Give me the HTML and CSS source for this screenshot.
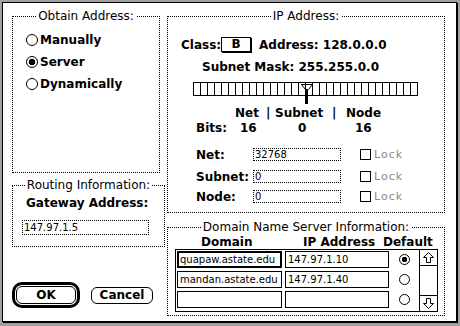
FILE: index.html
```html
<!DOCTYPE html>
<html>
<head>
<meta charset="utf-8">
<link rel="stylesheet" href="styles.css">
</head>
<body>
<div class="window">
  <div class="col col-left">
    <div class="group obtain">
      <div class="legend">Obtain Address:</div>
      <div class="radios">
        <div class="radio"><span class="rb"></span>Manually</div>
        <div class="radio"><span class="rb on"></span>Server</div>
        <div class="radio"><span class="rb"></span>Dynamically</div>
      </div>
    </div>
    <div class="group routing">
      <div class="legend">Routing Information:</div>
      <div class="gw-label">Gateway Address:</div>
      <div class="field gw">147.97.1.5</div>
    </div>
    <div class="buttons">
      <div class="ring"><div class="btn ok">OK</div></div>
      <div class="btn cancel">Cancel</div>
    </div>
  </div>
  <div class="col col-right">
    <div class="group ip">
      <div class="legend">IP Address:</div>
      <div class="class-row">
        <span class="class-label">Class:</span>
        <span class="class-box">B</span>
        <span class="addr">Address: 128.0.0.0</span>
      </div>
      <div class="mask">Subnet Mask: 255.255.0.0</div>
      <div class="slider-wrap">
        <div class="slider"></div>
        <svg class="thumb" width="12" height="20" viewBox="0 0 12 20" shape-rendering="crispEdges">
          <path d="M0.5 0.5H11.5M0.5 0.5L4.5 5.5M11.5 0.5L7.5 5.5" stroke="#000" stroke-width="1" fill="none" shape-rendering="auto"/>
          <rect x="0" y="0" width="12" height="1" fill="#000"/>
          <rect x="4" y="5" width="3" height="15" fill="#000"/>
        </svg>
      </div>
      <div class="nsn">
        <span>Net</span><span>|</span><span>Subnet</span><span>|</span><span>Node</span>
      </div>
      <div class="bits">
        <span>Bits:</span><span>16</span><span>0</span><span>16</span>
      </div>
      <div class="frow r1">
        <span class="flabel">Net:</span>
        <span class="field nf">32768</span>
        <span class="cb"></span><span class="lock">Lock</span>
      </div>
      <div class="frow r2">
        <span class="flabel">Subnet:</span>
        <span class="field nf">0</span>
        <span class="cb"></span><span class="lock">Lock</span>
      </div>
      <div class="frow r3">
        <span class="flabel">Node:</span>
        <span class="field nf">0</span>
        <span class="cb"></span><span class="lock">Lock</span>
      </div>
    </div>
    <div class="group dns">
      <div class="legend">Domain Name Server Information:</div>
      <div class="dns-head">
        <span>Domain</span><span>IP Address</span><span>Default</span>
      </div>
      <div class="table">
        <div class="rows">
          <div class="trow">
            <span class="cell dom focus">quapaw.astate.edu</span>
            <span class="cell ipc">147.97.1.10</span>
            <span class="trb on"></span>
          </div>
          <div class="trow">
            <span class="cell dom">mandan.astate.edu</span>
            <span class="cell ipc">147.97.1.40</span>
            <span class="trb"></span>
          </div>
          <div class="trow">
            <span class="cell dom"></span>
            <span class="cell ipc"></span>
            <span class="trb"></span>
          </div>
        </div>
        <div class="scroll">
          <div class="arrow up">
            <svg width="13" height="13" viewBox="0 0 13 13"><path d="M6.5 1.5L11.5 6.5H8.5V11.5H4.5V6.5H1.5Z" fill="#fff" stroke="#000" stroke-width="1" stroke-linejoin="miter"/></svg>
          </div>
          <div class="track"></div>
          <div class="arrow down">
            <svg width="13" height="13" viewBox="0 0 13 13"><path d="M6.5 11.5L11.5 6.5H8.5V1.5H4.5V6.5H1.5Z" fill="#fff" stroke="#000" stroke-width="1" stroke-linejoin="miter"/></svg>
          </div>
        </div>
      </div>
    </div>
  </div>
</div>
</body>
</html>
```
FILE: styles.css
```css
html, body {
  margin: 0;
  padding: 0;
}
body {
  background: #a0a0a0;
  padding: 2px;
  width: 460px;
  height: 326px;
  box-sizing: border-box;
  font-family: "DejaVu Sans", sans-serif;
  font-weight: bold;
  font-size: 12px;
  color: #000;
}
.window {
  width: 455px;
  height: 320px;
  box-sizing: border-box;
  border: 1px solid #000;
  box-shadow: 1px 1px 0 #000;
  background: #fff;
  display: flex;
  gap: 2px;
  padding: 13px 0 0 9px;
}
.col {
  display: flex;
  flex-direction: column;
}
.col-left { width: 153px; }
.col-right { width: 278px; }

.group {
  border: 1px dotted #000;
  box-sizing: border-box;
}
.legend {
  display: table;
  margin: -8px auto 0;
  padding: 0 2px;
  background: #fff;
  line-height: 14px;
  font-weight: normal;
  font-size: 12px;
}

/* Obtain */
.obtain { width: 148px; height: 157px; }
.radios {
  margin-top: 6px;
  padding-left: 13px;
}
.radio {
  display: flex;
  align-items: center;
  height: 22px;
}
.rb {
  width: 12px;
  height: 12px;
  border: 1px solid #000;
  border-radius: 50%;
  box-sizing: border-box;
  margin-right: 2px;
  background: #fff;
}
.rb.on, .trb.on {
  background: radial-gradient(circle, #000 0 3px, #fff 3.6px);
}

/* Routing */
.routing {
  width: 153px;
  height: 62px;
  margin-top: 12px;
}
.routing .legend { padding: 0 1px; }
.gw-label {
  margin-top: 3px;
  padding-left: 13px;
  line-height: 16px;
}
.field {
  display: block;
  box-sizing: border-box;
  border: 1px dotted #000;
  font-weight: normal;
  font-size: 10px;
  padding-left: 1px;
}
.gw {
  margin: 9px 0 0 9px;
  width: 127px;
  height: 15px;
  line-height: 13px;
}

/* Buttons */
.buttons {
  margin-top: 35px;
  display: flex;
  align-items: center;
}
.ring {
  width: 68px;
  height: 26px;
  box-sizing: border-box;
  border: 3px solid #000;
  border-radius: 10px;
  padding: 1px;
}
.btn {
  box-sizing: border-box;
  border: 1px solid #000;
  border-radius: 6px;
  text-align: center;
}
.ok {
  height: 100%;
  line-height: 16px;
}
.cancel {
  width: 62px;
  height: 17px;
  line-height: 15px;
  margin-left: 11px;
}

/* IP */
.ip { width: 278px; height: 197px; }
.class-row {
  display: flex;
  align-items: center;
  height: 16px;
  margin-top: 14px;
  padding-left: 13px;
}
.class-label { width: 40px; }
.class-box {
  width: 30px;
  height: 15px;
  box-sizing: border-box;
  border: 1px solid #000;
  box-shadow: 1px 1px 0 #000;
  text-align: center;
  line-height: 13px;
  align-self: flex-start;
}
.addr { margin-left: 8px; }
.mask {
  margin-top: 7px;
  padding-left: 34px;
  line-height: 14px;
}
.slider-wrap {
  position: relative;
  margin: 6px 0 0 25px;
  height: 22px;
}
.slider {
  margin-top: 8px;
  width: 225px;
  height: 14px;
  box-sizing: border-box;
  border: 1px solid #000;
  background-image: linear-gradient(90deg, transparent 6px, #000 6px);
  background-size: 7px 100%;
}
.thumb {
  position: absolute;
  left: 108px;
  top: 2px;
}
.nsn {
  display: grid;
  grid-template-columns: 31px 9px 57px 14px auto;
  margin-top: 2px;
  padding-left: 67px;
  line-height: 14px;
}
.bits {
  display: grid;
  grid-template-columns: 44px 58px 57px auto;
  margin-top: 1px;
  padding-left: 28px;
  line-height: 14px;
}
.frow {
  display: flex;
  align-items: center;
  height: 13px;
  padding-left: 28px;
}
.r1 { margin-top: 13px; }
.r2 { margin-top: 9px; }
.r3 { margin-top: 7px; }
.flabel { width: 57px; }
.nf {
  width: 88px;
  height: 13px;
  line-height: 11px;
}
.cb {
  width: 11px;
  height: 11px;
  box-sizing: border-box;
  border: 1px solid #000;
  margin-left: 19px;
}
.lock {
  margin-left: 3px;
  color: #8a8a8a;
  font-weight: normal;
  font-size: 11px;
  letter-spacing: 1px;
}

/* DNS */
.dns {
  width: 278px;
  height: 89px;
  margin-top: 14px;
}
.dns-head {
  display: grid;
  grid-template-columns: 102px 80px auto;
  margin-top: 2px;
  padding-left: 33px;
  line-height: 13px;
}
.table {
  display: flex;
  margin-left: 7px;
  width: 263px;
  height: 63px;
  box-sizing: border-box;
  border: 1px solid #000;
}
.rows {
  display: flex;
  flex-direction: column;
  gap: 3px;
  padding: 1px 0 0 1px;
}
.trow {
  display: flex;
  align-items: center;
  height: 17px;
}
.cell {
  box-sizing: border-box;
  height: 17px;
  border: 1px solid #000;
  font-weight: normal;
  font-size: 10px;
  line-height: 15px;
  padding-left: 2px;
}
.cell.focus {
  border-width: 2px;
  line-height: 13px;
  padding-left: 1px;
}
.dom { width: 105px; }
.ipc { width: 104px; margin-left: 3px; }
.trb {
  width: 11px;
  height: 11px;
  box-sizing: border-box;
  border: 1px solid #000;
  border-radius: 50%;
  margin-left: 10px;
}
.trb.on {
  background: radial-gradient(circle, #000 0 2.5px, #fff 3px);
}
.scroll {
  margin-left: auto;
  width: 17px;
  border-left: 1px solid #000;
  display: flex;
  flex-direction: column;
}
.arrow {
  height: 15px;
  display: flex;
  align-items: center;
  justify-content: center;
}
.arrow.up { border-bottom: 1px solid #000; }
.arrow.down { border-top: 1px solid #000; }
.track { flex: 1; }
```
